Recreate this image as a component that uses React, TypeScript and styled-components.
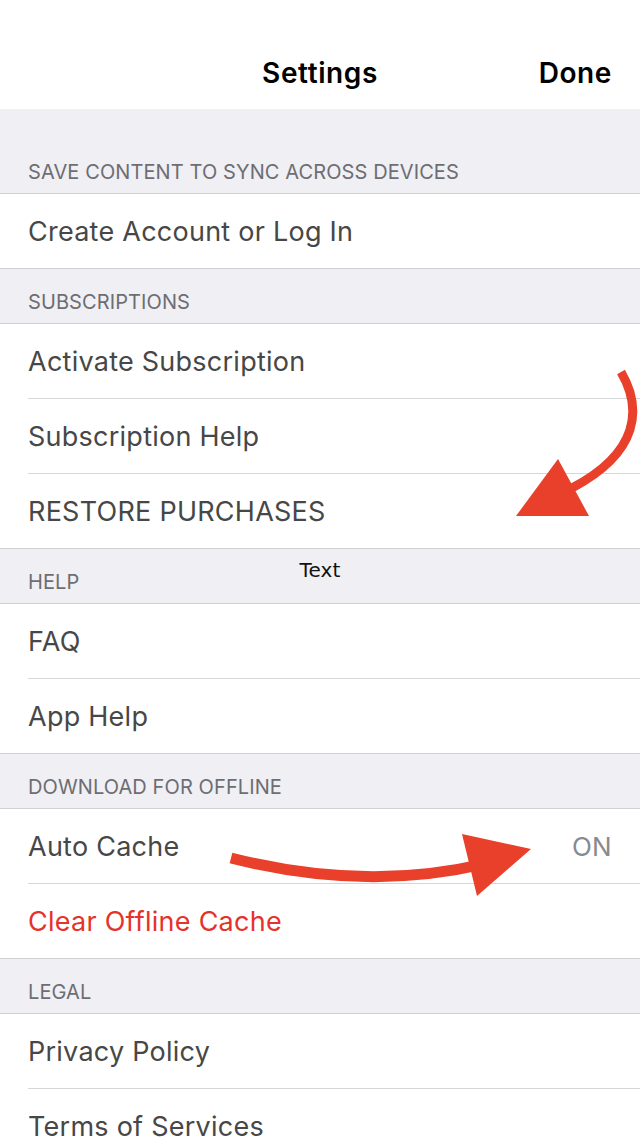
import styled, { createGlobalStyle } from "styled-components";

const GlobalStyle = createGlobalStyle`
  html, body {
    margin: 0;
    padding: 0;
    background: #ffffff;
    overflow: hidden;
  }
  body {
    font-family: Inter, "Noto Sans", "Liberation Sans", sans-serif;
    -webkit-font-smoothing: antialiased;
  }
`;

const Page = styled.div`
  position: relative;
  width: 640px;
  height: 1138px;
  overflow: hidden;
  background: #efeff4;
`;

const NavBar = styled.div`
  display: grid;
  grid-template-columns: 1fr auto 1fr;
  align-items: center;
  height: 109px;
  box-sizing: border-box;
  padding: 36px 28px 0;
  background: #ffffff;
`;

const NavTitle = styled.div`
  grid-column: 2;
  font-size: 28px;
  font-weight: 600;
  color: #000000;
  letter-spacing: 0.6px;
`;

const DoneButton = styled.div`
  grid-column: 3;
  justify-self: end;
  font-size: 28px;
  font-weight: 600;
  color: #000000;
  letter-spacing: 0.6px;
`;

const SectionHeader = styled.div<{ $tall?: boolean }>`
  position: relative;
  display: flex;
  align-items: flex-end;
  height: ${(p) => (p.$tall ? "84px" : "54px")};
  box-sizing: border-box;
  padding: 0 28px 11px;
  font-size: 20px;
  line-height: 1;
  color: #6d6d72;
  letter-spacing: 0.1px;
`;

const FloatingLabel = styled.span`
  position: absolute;
  left: 50%;
  top: 11px;
  transform: translateX(-50%);
  font-family: "DejaVu Sans", sans-serif;
  font-size: 20px;
  line-height: 1;
  color: #111111;
`;

const Group = styled.div`
  background: #ffffff;
  border-top: 1px solid #cfcfd4;
  border-bottom: 1px solid #cfcfd4;
`;

const Row = styled.div`
  display: flex;
  align-items: center;
  justify-content: space-between;
  height: 74px;
  margin-left: 28px;
  padding-right: 28px;
  border-bottom: 1px solid #d6d6da;

  &:last-child {
    border-bottom: none;
  }
`;

const RowLabel = styled.span<{ $danger?: boolean }>`
  font-size: 27px;
  color: ${(p) => (p.$danger ? "#e5322a" : "#474747")};
  letter-spacing: 0.25px;
`;

const RowValue = styled.span`
  font-size: 26px;
  color: #8a8a8e;
  letter-spacing: 0.3px;
`;

const Overlay = styled.svg`
  position: absolute;
  left: 0;
  top: 0;
  pointer-events: none;
`;

type Item = { label: string; value?: string; danger?: boolean };
type Section = { title: string; tall?: boolean; note?: string; items: Item[] };

const sections: Section[] = [
  {
    title: "SAVE CONTENT TO SYNC ACROSS DEVICES",
    tall: true,
    items: [{ label: "Create Account or Log In" }],
  },
  {
    title: "SUBSCRIPTIONS",
    items: [
      { label: "Activate Subscription" },
      { label: "Subscription Help" },
      { label: "RESTORE PURCHASES" },
    ],
  },
  {
    title: "HELP",
    note: "Text",
    items: [{ label: "FAQ" }, { label: "App Help" }],
  },
  {
    title: "DOWNLOAD FOR OFFLINE",
    items: [
      { label: "Auto Cache", value: "ON" },
      { label: "Clear Offline Cache", danger: true },
    ],
  },
  {
    title: "LEGAL",
    items: [{ label: "Privacy Policy" }, { label: "Terms of Services" }],
  },
];

const ARROW_RED = "#e8402b";

const App = () => {
  return (
    <Page>
      <GlobalStyle />
      <NavBar>
        <NavTitle>Settings</NavTitle>
        <DoneButton>Done</DoneButton>
      </NavBar>

      {sections.map((s) => (
        <div key={s.title}>
          <SectionHeader $tall={s.tall}>
            {s.title}
            {s.note && <FloatingLabel>{s.note}</FloatingLabel>}
          </SectionHeader>
          <Group>
            {s.items.map((it) => (
              <Row key={it.label}>
                <RowLabel $danger={it.danger}>{it.label}</RowLabel>
                {it.value && <RowValue>{it.value}</RowValue>}
              </Row>
            ))}
          </Group>
        </div>
      ))}

      {/* annotation arrows drawn over the list */}
      <Overlay width="640" height="1138" viewBox="0 0 640 1138">
        <path
          d="M621 372 C642 408 640 452 572 488"
          fill="none"
          stroke={ARROW_RED}
          strokeWidth="9"
        />
        <polygon points="558,459 516,516 589,516" fill={ARROW_RED} />
        <path
          d="M231 858 Q365 892 484 864"
          fill="none"
          stroke={ARROW_RED}
          strokeWidth="11"
        />
        <polygon points="462,834 531,849 477,896" fill={ARROW_RED} />
      </Overlay>
    </Page>
  );
};

export default App;
